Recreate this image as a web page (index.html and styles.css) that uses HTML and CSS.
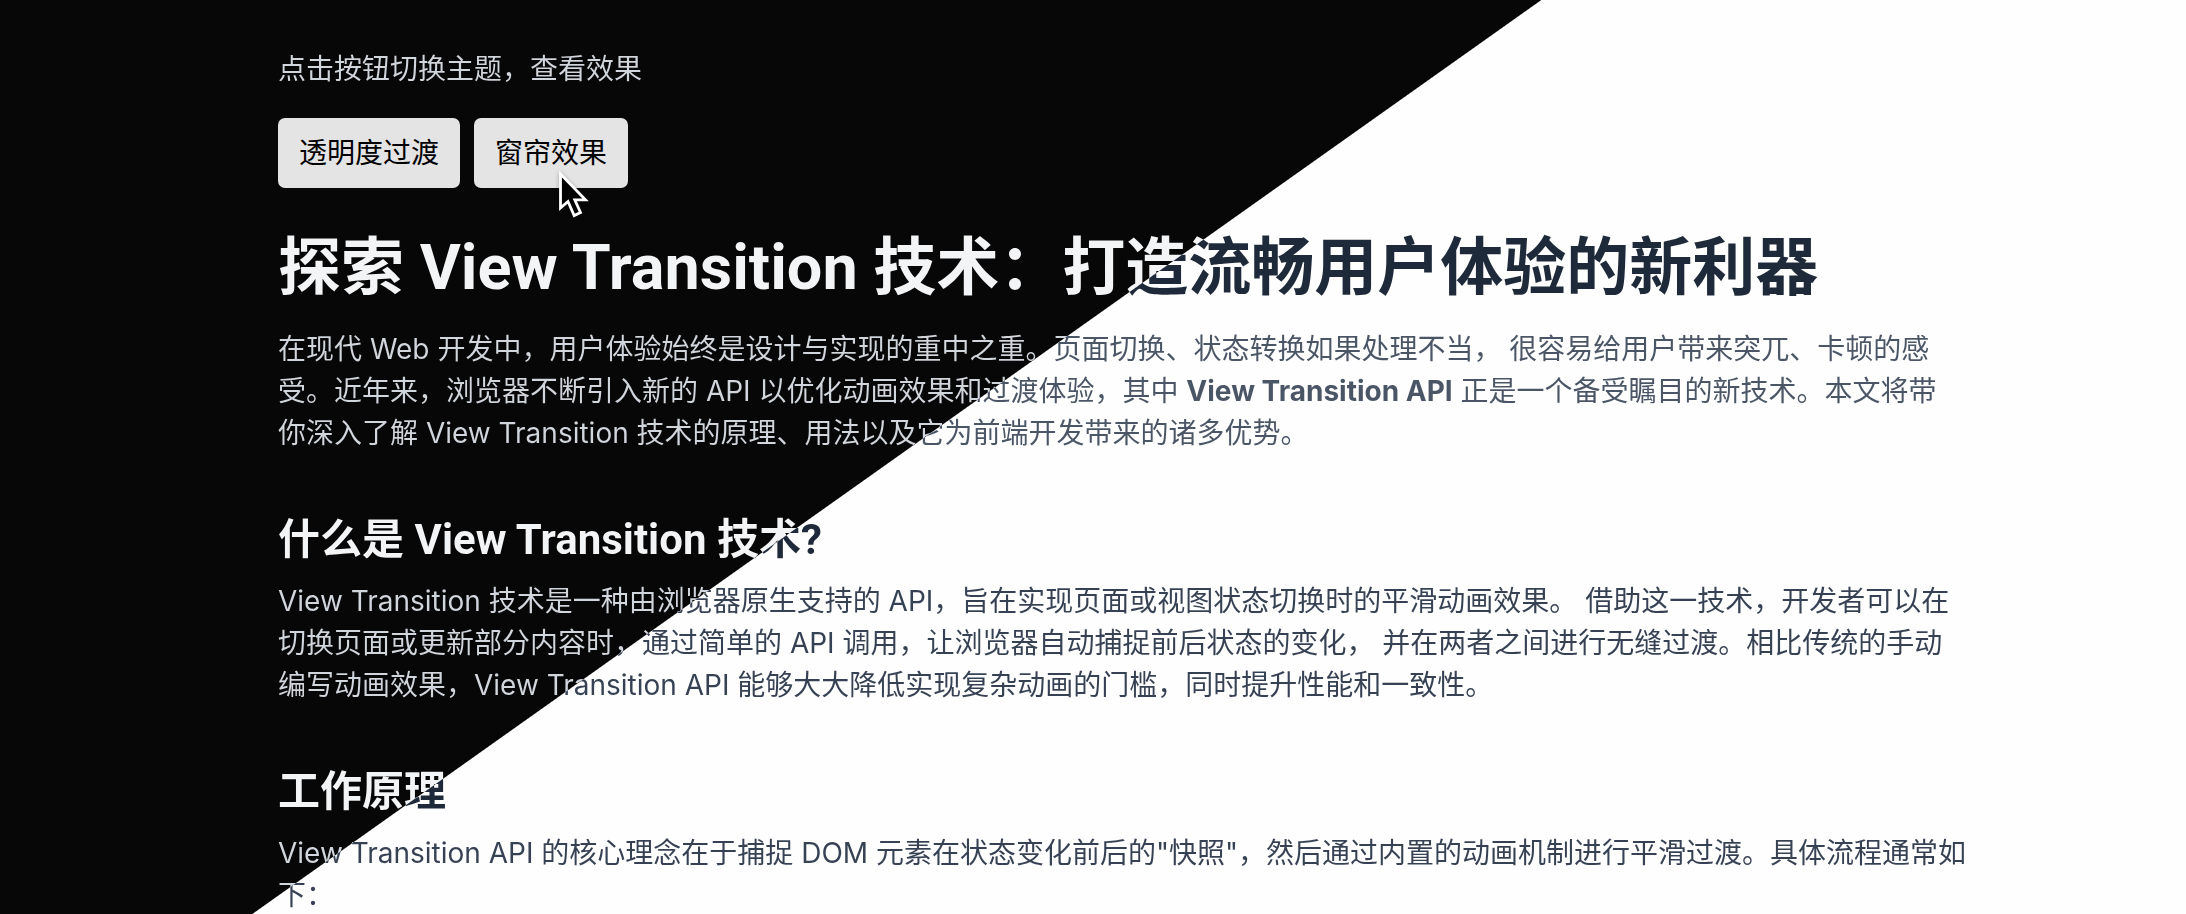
FILE: index.html
```html
<!DOCTYPE html>
<html lang="zh-CN">
<head>
<meta charset="utf-8">
<meta name="viewport" content="width=device-width, initial-scale=1">
<title>View Transition</title>
<link rel="stylesheet" href="styles.css">
</head>
<body>
<main class="page">
  <p class="hint">点击按钮切换主题，查看效果</p>
  <div class="actions">
    <button class="button" type="button">透明度过渡</button>
    <button class="button" type="button">窗帘效果
      <svg class="cursor" viewBox="0 0 32 50" aria-hidden="true"><path d="M2.500 4V38L10 31.500L16.200 45.500L22.500 42.500L16.800 29.800H27.500Z" fill="#000" stroke="#fff" stroke-width="2.800"/></svg>
    </button>
  </div>
  <article class="article">
    <header class="block block-intro">
      <h1 class="title">探索 View Transition 技术：打造流畅用户体验的新利器</h1>
      <p class="lead">在现代 Web 开发中，用户体验始终是设计与实现的重中之重。页面切换、状态转换如果处理不当，
        很容易给用户带来突兀、卡顿的感受。近年来，浏览器不断引入新的 API 以优化动画效果和过渡体验，其中 <strong>View Transition API</strong> 正是一个备受瞩目的新技术。本文将带你深入了解 View Transition 技术的原理、用法以及它为前端开发带来的诸多优势。</p>
    </header>
    <section class="block">
      <h2 class="heading">什么是 View Transition 技术?</h2>
      <p class="text">View Transition 技术是一种由浏览器原生支持的 API，旨在实现页面或视图状态切换时的平滑动画效果。
        借助这一技术，开发者可以在切换页面或更新部分内容时，通过简单的 API 调用，让浏览器自动捕捉前后状态的变化，
        并在两者之间进行无缝过渡。相比传统的手动编写动画效果，View Transition API 能够大大降低实现复杂动画的门槛，同时提升性能和一致性。</p>
    </section>
    <section class="block">
      <h2 class="heading">工作原理</h2>
      <p class="text">View Transition API 的核心理念在于捕捉 DOM 元素在状态变化前后的"快照"，然后通过内置的动画机制进行平滑过渡。具体流程通常如下：</p>
    </section>
  </article>
</main>
</body>
</html>
```
FILE: styles.css
```css
:root {
  --sweep-angle: 144.66deg;
  --sweep: 44.33%;
  --sweep-end: 44.38%;
}

* {
  box-sizing: border-box;
}

body {
  height: 100vh;
  margin: 0;
  overflow: hidden;
  font: 28px/42px Inter, "Noto Sans CJK SC", sans-serif;
  background: linear-gradient(var(--sweep-angle), #070707 var(--sweep), #fefefe var(--sweep-end)) fixed;
}

h1, h2, p {
  margin: 0;
}

.page {
  display: flex;
  flex-direction: column;
  gap: 28px;
  padding: 48px 218px 0 278px;
}

/* Text takes its colour from the side of the curtain it lies on. */
.hint, .lead, .text, .title, .heading {
  color: var(--light-side);
  background: linear-gradient(var(--sweep-angle), var(--dark-side) var(--sweep), var(--light-side) var(--sweep-end)) fixed;
  -webkit-background-clip: text;
  background-clip: text;
  -webkit-text-fill-color: transparent;
}

.hint, .lead {
  --dark-side: #d1d5dc;
  --light-side: #4a5565;
}

.lead {
  padding-right: 14px;
}

.text {
  --dark-side: #d1d5dc;
  --light-side: #364153;
}

.title, .heading {
  --dark-side: #f3f4f6;
  --light-side: #1e2939;
  font-family: Roboto, "Noto Sans CJK SC", sans-serif;
  font-weight: 700;
}

.title {
  font-size: 63px;
  line-height: 76px;
}

.heading {
  font-size: 42px;
  line-height: 60px;
}

.actions {
  display: flex;
  gap: 14px;
}

.button {
  position: relative;
  padding: 14px 21px;
  border: 0;
  border-radius: 7px;
  background: #e4e4e4;
  color: #000;
  font: inherit;
}

.cursor {
  position: absolute;
  top: 52px;
  right: 38px;
  width: 32px;
  height: 50px;
  filter: drop-shadow(0 1px 2px rgb(0 0 0 / 30%));
}

.article {
  display: flex;
  flex-direction: column;
  gap: 56px;
  padding-top: 14px;
}

.block {
  display: flex;
  flex-direction: column;
  gap: 10px;
}

.block-intro {
  gap: 22px;
}
```
